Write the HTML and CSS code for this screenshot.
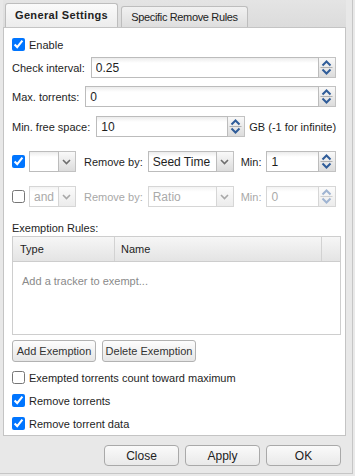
FILE: index.html
```html
<!DOCTYPE html>
<html lang="en">
<head>
    <meta charset="UTF-8">
    <title>AutoRemovePlus Preferences</title>
    <link rel="stylesheet" href="styles.css">
</head>
<body>
<div class="window">
    <div class="tabpanel">
        <div class="tab-strip">
            <div class="tab active">General Settings</div>
            <div class="tab">Specific Remove Rules</div>
        </div>
        <div class="tab-body">
            <label class="check-row"><input type="checkbox" checked>Enable</label>

            <div class="field-row row-interval">
                <span class="field-label">Check interval:</span>
                <input class="text-input" type="text" value="0.25">
                <span class="trigger spin">
                    <svg width="15" height="19" viewBox="0 0 15 19"><path d="M3.5 7.5 L7.5 3.5 L11.5 7.5" fill="none" stroke="#2f5c99" stroke-width="2"/><path d="M1.5 9.5 H13.5" stroke="#b0b0b0"/><path d="M3.5 11.5 L7.5 15.5 L11.5 11.5" fill="none" stroke="#2f5c99" stroke-width="2"/></svg>
                </span>
            </div>

            <div class="field-row row-max">
                <span class="field-label">Max. torrents:</span>
                <input class="text-input" type="text" value="0">
                <span class="trigger spin">
                    <svg width="15" height="19" viewBox="0 0 15 19"><path d="M3.5 7.5 L7.5 3.5 L11.5 7.5" fill="none" stroke="#2f5c99" stroke-width="2"/><path d="M1.5 9.5 H13.5" stroke="#b0b0b0"/><path d="M3.5 11.5 L7.5 15.5 L11.5 11.5" fill="none" stroke="#2f5c99" stroke-width="2"/></svg>
                </span>
            </div>

            <div class="field-row row-free">
                <span class="field-label">Min. free space:</span>
                <input class="text-input free-input" type="text" value="10">
                <span class="trigger spin">
                    <svg width="15" height="19" viewBox="0 0 15 19"><path d="M3.5 7.5 L7.5 3.5 L11.5 7.5" fill="none" stroke="#2f5c99" stroke-width="2"/><path d="M1.5 9.5 H13.5" stroke="#b0b0b0"/><path d="M3.5 11.5 L7.5 15.5 L11.5 11.5" fill="none" stroke="#2f5c99" stroke-width="2"/></svg>
                </span>
                <span class="after-text">GB (-1 for infinite)</span>
            </div>

            <div class="field-row rule-row row-rule1">
                <input type="checkbox" checked>
                <div class="combo combo-op">
                    <input class="text-input" type="text" value="">
                    <span class="trigger"><svg width="15" height="19" viewBox="0 0 15 19"><path d="M4 8 L7.5 11.5 L11 8" fill="none" stroke="#6e6e6e" stroke-width="1.6"/></svg></span>
                </div>
                <span class="rule-label">Remove by:</span>
                <div class="combo combo-type">
                    <input class="text-input" type="text" value="Seed Time">
                    <span class="trigger"><svg width="15" height="19" viewBox="0 0 15 19"><path d="M4 8 L7.5 11.5 L11 8" fill="none" stroke="#6e6e6e" stroke-width="1.6"/></svg></span>
                </div>
                <span class="min-label">Min:</span>
                <input class="text-input" type="text" value="1">
                <span class="trigger spin">
                    <svg width="15" height="19" viewBox="0 0 15 19"><path d="M3.5 7.5 L7.5 3.5 L11.5 7.5" fill="none" stroke="#2f5c99" stroke-width="2"/><path d="M1.5 9.5 H13.5" stroke="#b0b0b0"/><path d="M3.5 11.5 L7.5 15.5 L11.5 11.5" fill="none" stroke="#2f5c99" stroke-width="2"/></svg>
                </span>
            </div>

            <div class="field-row rule-row row-rule2 disabled">
                <input type="checkbox">
                <div class="combo combo-op">
                    <input class="text-input" type="text" value="and" disabled>
                    <span class="trigger"><svg width="15" height="19" viewBox="0 0 15 19"><path d="M4 8 L7.5 11.5 L11 8" fill="none" stroke="#a8a8a8" stroke-width="1.6"/></svg></span>
                </div>
                <span class="rule-label">Remove by:</span>
                <div class="combo combo-type">
                    <input class="text-input" type="text" value="Ratio" disabled>
                    <span class="trigger"><svg width="15" height="19" viewBox="0 0 15 19"><path d="M4 8 L7.5 11.5 L11 8" fill="none" stroke="#a8a8a8" stroke-width="1.6"/></svg></span>
                </div>
                <span class="min-label">Min:</span>
                <input class="text-input" type="text" value="0" disabled>
                <span class="trigger spin">
                    <svg width="15" height="19" viewBox="0 0 15 19"><path d="M3.5 7.5 L7.5 3.5 L11.5 7.5" fill="none" stroke="#9fb4d2" stroke-width="2"/><path d="M1.5 9.5 H13.5" stroke="#cfcfcf"/><path d="M3.5 11.5 L7.5 15.5 L11.5 11.5" fill="none" stroke="#9fb4d2" stroke-width="2"/></svg>
                </span>
            </div>

            <div class="section-label">Exemption Rules:</div>
            <div class="grid">
                <div class="grid-header">
                    <div class="col col-type">Type</div>
                    <div class="col col-name">Name</div>
                    <div class="col col-pad"></div>
                </div>
                <div class="grid-empty">Add a tracker to exempt...</div>
            </div>

            <div class="grid-buttons">
                <button class="btn btn-add">Add Exemption</button>
                <button class="btn btn-del">Delete Exemption</button>
            </div>

            <label class="check-row option"><input type="checkbox">Exempted torrents count toward maximum</label>
            <label class="check-row option"><input type="checkbox" checked>Remove torrents</label>
            <label class="check-row option"><input type="checkbox" checked>Remove torrent data</label>
        </div>
    </div>
    <div class="footer">
        <button class="footer-btn">Close</button>
        <button class="footer-btn">Apply</button>
        <button class="footer-btn">OK</button>
    </div>
</div>
</body>
</html>
```

FILE: styles.css
```css
body { margin: 0; background-color: #e9e9e9; font-family: "Liberation Sans", Arial, sans-serif; font-size: 11px; color: #1e1e1e; }
.window {
    width: 352px; height: 473px;
    border-right: 1px solid #c6c6c6;
    border-bottom: 1px solid #c6c6c6;
    background-color: #e8e8e8;
    display: flex; flex-direction: column;
}
.tabpanel { margin-left: 3px; width: 343px; height: 436px; display: flex; flex-direction: column; }

/* tabs */
.tab-strip {
    height: 27px; box-sizing: border-box;
    padding: 3px 0 0 2px;
    display: flex; align-items: flex-end; gap: 3px;
    background: linear-gradient(#e4e4e4, #dcdcdc);
}
.tab {
    box-sizing: border-box;
    width: 127px; height: 21px; line-height: 20px;
    border: 1px solid #bdbdbd; border-bottom: none;
    border-radius: 3px 3px 0 0;
    background: linear-gradient(#f1f1f1, #dedede);
    text-align: center;
    letter-spacing: -0.35px;
    color: #222;
}
.tab.active {
    width: 113px; height: 24px; line-height: 23px;
    font-weight: bold; letter-spacing: 0.35px;
    background: linear-gradient(#fafafa, #ececec);
}
.tab-body {
    flex: 1;
    border: 1px solid #c4c4c4;
    background-color: #fff;
    padding: 8px 4px 0 8px;
}

/* checkbox rows */
.check-row { display: flex; align-items: center; height: 17px; }
.check-row input, .rule-row input[type="checkbox"] { margin: 0 4px 0 0; width: 13px; height: 13px; }
.check-row.option { margin-top: 6px; }
.check-row.option:first-of-type { margin-top: 0; }

/* field rows */
.field-row { display: flex; align-items: center; height: 21px; margin-right: 5px; }
.row-interval { margin-top: 4px; }
.row-max { margin-top: 8px; }
.row-free { margin-top: 9px; }
.row-rule1 { margin-top: 14px; }
.row-rule2 { margin-top: 14px; }
.field-label { margin-right: 6px; white-space: nowrap; }
.text-input {
    flex: 1; min-width: 0;
    box-sizing: border-box; height: 21px;
    border: 1px solid #bcbcbc;
    padding: 0 4px;
    font-family: "Liberation Sans", Arial, sans-serif; font-size: 12px; color: #1e1e1e;
    background: linear-gradient(#ececec, #ffffff 5px);
    outline: none;
}
.free-input { flex: none; width: 132px; }
.after-text { margin-left: 4px; white-space: nowrap; }
.trigger {
    flex: none; box-sizing: border-box;
    width: 17px; height: 21px;
    border: 1px solid #c2c2c2; border-left: none;
    background: linear-gradient(#f9f9f9, #dcdcdc);
    display: flex;
}
.combo { display: flex; }
.combo-op { width: 47px; }
.combo-type { width: 86px; margin-left: 5px; }
.rule-label { margin-left: 8px; white-space: nowrap; }
.min-label { margin: 0 5px 0 7px; }
.rule-row input[type="checkbox"] { margin-right: 4px; }

.disabled { color: #a8a8a8; }
.disabled .text-input { color: #aaaaaa; border-color: #d6d6d6; background: linear-gradient(#f3f3f3, #ffffff 5px); }
.disabled .trigger { border-color: #d6d6d6; background: linear-gradient(#fbfbfb, #ececec); }

/* exemption grid */
.section-label { margin-top: 14px; line-height: 14px; }
.grid {
    margin-top: 1px;
    height: 99px; box-sizing: border-box;
    border: 1px solid #cecece;
}
.grid-header {
    display: flex; height: 24px;
    background: linear-gradient(#f6f6f6, #e4e4e4);
    border-bottom: 1px solid #cdcdcd;
}
.col { line-height: 24px; box-sizing: border-box; border-right: 1px solid #d2d2d2; }
.col-type { width: 102px; padding-left: 7px; }
.col-name { width: 207px; padding-left: 6px; }
.col-pad { flex: 1; border-right: none; }
.grid-empty { padding: 12px 0 0 9px; line-height: 14px; color: #8a8a8a; }

.grid-buttons { display: flex; gap: 6px; margin-top: 5px; margin-bottom: 7px; }
.btn {
    height: 22px; padding: 0;
    border: 1px solid #b2b2b2; border-radius: 3px;
    background: linear-gradient(#fdfdfd, #e6e6e6);
    font-family: "Liberation Sans", Arial, sans-serif; font-size: 11px; color: #333;
}
.btn-add { width: 84px; }
.btn-del { width: 94px; }

/* footer */
.footer { flex: 1; display: flex; justify-content: flex-end; gap: 6px; padding: 9px 11px 0 0; }
.footer-btn {
    width: 75px; height: 21px; padding: 0;
    border: 1px solid #a9a9a9; border-radius: 4px;
    background: linear-gradient(#fafafa, #e9e9e9);
    font-family: "Liberation Sans", Arial, sans-serif; font-size: 12px; color: #222;
}
```
